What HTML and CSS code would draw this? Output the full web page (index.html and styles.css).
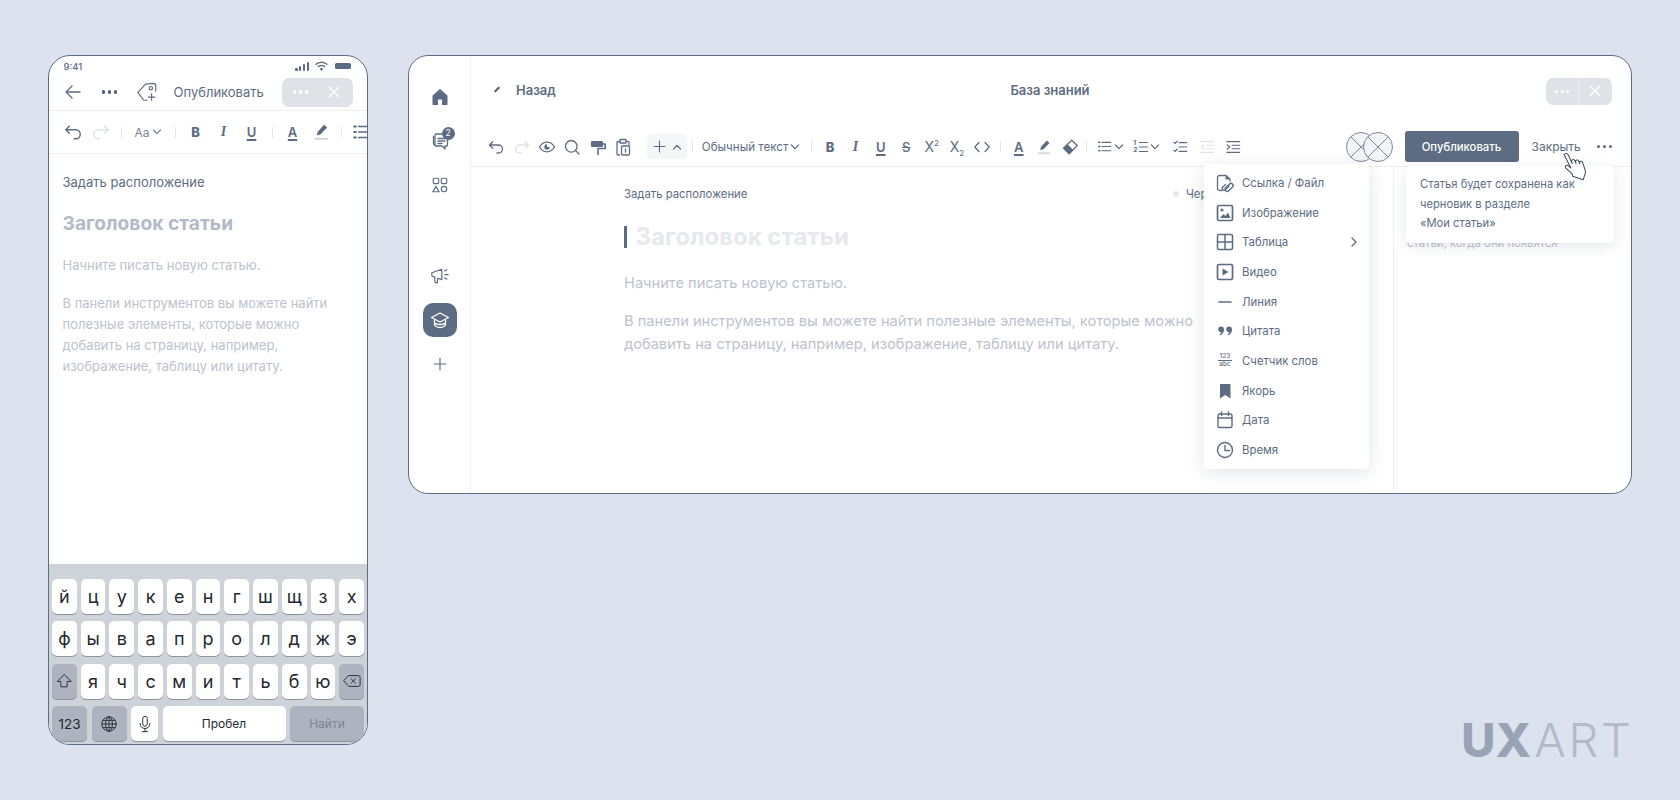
FILE: index.html
```html
<!DOCTYPE html>
<html lang="ru">
<head>
<meta charset="utf-8">
<title>База знаний</title>
<link rel="stylesheet" href="styles.css">
</head>
<body>
<svg class="sprite" xmlns="http://www.w3.org/2000/svg">
  <symbol id="undo" viewBox="0 0 18 18"><path d="M2.500 7h9a4 4 0 0 1 4 4v0a4 4 0 0 1-4 4H10M2.500 7l3.200-3.200M2.500 7l3.200 3.200"/></symbol>
  <symbol id="redo" viewBox="0 0 18 18"><path d="M15.500 7h-9a4 4 0 0 0-4 4v0a4 4 0 0 0 4 4H8M15.500 7l-3.200-3.200M15.500 7l-3.200 3.200"/></symbol>
  <symbol id="eye" viewBox="0 0 18 18"><path d="M1.500 9S4.200 4.200 9 4.200 16.500 9 16.500 9 13.800 13.800 9 13.800 1.500 9 1.500 9z"/><path class="solid" d="M9 6.300a2.700 2.700 0 1 0 2.700 2.700H9z"/></symbol>
  <symbol id="search" viewBox="0 0 18 18"><circle cx="8.300" cy="8.300" r="5.800"/><path d="M12.500 12.500 16 16"/></symbol>
  <symbol id="roller" viewBox="0 0 18 18"><path class="solid" d="M3 3h10a1 1 0 0 1 1 1v4a1 1 0 0 1-1 1H3a1 1 0 0 1-1-1V4a1 1 0 0 1 1-1z"/><path d="M14 6h2.200v4.500H9v6" stroke-width="1.600"/></symbol>
  <symbol id="clip" viewBox="0 0 18 18"><path d="M6 3.500H4a1 1 0 0 0-1 1V16a1 1 0 0 0 1 1h1.500M12 3.500h2a1 1 0 0 1 1 1V7"/><rect x="6" y="1.500" width="6" height="3.500" rx=".6"/><rect x="7.500" y="8" width="8" height="9" rx="1"/><path d="M11.500 11v3"/></symbol>
  <symbol id="plus" viewBox="0 0 18 18"><path d="M9 2.500v13M2.500 9h13"/></symbol>
  <symbol id="down" viewBox="0 0 10 10"><path d="m1.500 3 3.500 3.700L8.500 3"/></symbol>
  <symbol id="up" viewBox="0 0 10 10"><path d="m1.500 7 3.500-3.700L8.500 7"/></symbol>
  <symbol id="right" viewBox="0 0 10 10"><path d="m3 1 4 4-4 4"/></symbol>
  <symbol id="code" viewBox="0 0 18 18"><path d="M6 4.500 1.800 9 6 13.500M12 4.500 16.200 9 12 13.500"/></symbol>
  <symbol id="pen" viewBox="0 0 18 18"><path class="solid" d="m11.800 2.500 2.700 2.500-6 6.200-3.300.9.800-3.300z"/><path class="bar" d="M4 15.200h10.500" stroke-width="2"/></symbol>
  <symbol id="eraser" viewBox="0 0 18 18"><path d="m10.700 2.200 5.500 5.300-8 8.200L2.500 10.300z" fill="none"/><path class="solid" d="M6.500 6.200 12.200 12l-4 3.900-5.900-5.600z"/></symbol>
  <symbol id="list" viewBox="0 0 18 18"><path d="M6 4h10.500M6 9h10.500M6 14h10.500"/><path d="M2 4h1.500M2 9h1.500M2 14h1.500" stroke-width="1.800"/></symbol>
  <symbol id="lines" viewBox="0 0 10 15"><path d="M.5 2.500h9M.5 7.500h9M.5 12.500h9" /></symbol>
  <symbol id="check" viewBox="0 0 18 18"><path d="M8 4h8.500M8 9h8.500M8 14h8.500"/><path d="m2 3.500 1.500 1.500L6 2.500M2 12.500 3.500 14 6 11.500"/></symbol>
  <symbol id="outdent" viewBox="0 0 18 18"><path d="M2 3h14.500M8 7h8.500M8 11h8.500M2 15h14.500M5.500 6.500 2.500 9l3 2.500"/></symbol>
  <symbol id="indent" viewBox="0 0 18 18"><path d="M2 3h14.500M8 7h8.500M8 11h8.500M2 15h14.500M2.500 6.500 5.500 9l-3 2.500"/></symbol>
  <symbol id="close" viewBox="0 0 16 16"><path d="m2.500 2.500 11 11M13.500 2.500l-11 11"/></symbol>
  <symbol id="back" viewBox="0 0 18 18"><path d="M16 9H2M8 3 2 9l6 6"/></symbol>
  <symbol id="tag" viewBox="0 0 24 24"><path d="M12 21H8.500L2 12.500 10.500 3.500 19 2.500c1.500 0 2.500 1 2.500 2.500v6"/><circle cx="16.200" cy="7.800" r="1.800"/><path d="M17 14v7M13.500 17.500h7"/></symbol>
  <symbol id="link" viewBox="0 0 20 20"><path d="M7 17.500H4.500a2 2 0 0 1-2-2v-11a2 2 0 0 1 2-2h6.500L15 6v2"/><path class="solid" d="M10.500 2.500V6.500H15z"/><path d="m10 15.500 4.500-4.500a2 2 0 0 1 3 3l-4 4a2 2 0 0 1-3-.5M14 13l-4 4a1.800 1.800 0 0 1-2.500-2.500l3-3" stroke-width="1.400"/></symbol>
  <symbol id="image" viewBox="0 0 20 20"><rect x="2.500" y="2.500" width="15" height="15" rx="1.500" stroke-width="1.700"/><circle class="solid" cx="7" cy="7" r="1.600"/><path class="solid" d="m5 15 3.500-4 2 2 2.500-3.500 2.500 5.500z"/></symbol>
  <symbol id="table" viewBox="0 0 20 20"><rect x="2.500" y="2.500" width="15" height="15" rx="1.500" stroke-width="1.500"/><path d="M10 2.500v15M2.500 10h15" stroke-width="1.500"/></symbol>
  <symbol id="video" viewBox="0 0 20 20"><rect x="2.500" y="2.500" width="15" height="15" rx="1.500" stroke-width="1.700"/><path class="solid" d="M7.500 6.500v7l6-3.500z"/></symbol>
  <symbol id="line" viewBox="0 0 20 20"><path d="M4 10h12" stroke-width="1.600"/></symbol>
  <symbol id="quote" viewBox="0 0 20 20"><path class="solid" d="M6 5.500a3 3 0 0 1 3 3c0 2.800-1.500 4.900-3.900 5.800l-.5-.9c1-.6 1.600-1.400 1.800-2.100A2.900 2.900 0 1 1 6 5.500zM14 5.500a3 3 0 0 1 3 3c0 2.800-1.500 4.900-3.900 5.800l-.5-.9c1-.6 1.600-1.400 1.800-2.100A2.900 2.900 0 1 1 14 5.500z"/></symbol>
  <symbol id="bookmark" viewBox="0 0 20 20"><path class="solid" d="M5 3h10.500v14.500L10.200 14 5 17.500z"/></symbol>
  <symbol id="calendar" viewBox="0 0 20 20"><rect x="3" y="4" width="14" height="13.500" rx="1.500" stroke-width="1.400"/><path d="M3 8h14M6.500 2v3.500M13.500 2v3.500" stroke-width="1.400"/></symbol>
  <symbol id="clock" viewBox="0 0 20 20"><circle cx="10" cy="10" r="7.500" stroke-width="1.400"/><path d="M10 5.500V10.500h4.500" stroke-width="1.400"/></symbol>
  <symbol id="home" viewBox="0 0 20 20"><path class="solid" d="M10 2 2.500 8.500V18H8v-5.500h4V18h5.500V8.500z"/></symbol>
  <symbol id="chat" viewBox="0 0 20 20"><path d="M3.500 5.500v7c0 1 .6 1.500 1.500 1.500"/><path d="M6 3h10.500a1 1 0 0 1 1 1v10a1 1 0 0 1-1 1H15v3l-3-3H6a1 1 0 0 1-1-1V4a1 1 0 0 1 1-1z"/><path d="M8 7.500h7M8 10h7M8 12.500h4"/></symbol>
  <symbol id="apps" viewBox="0 0 20 20"><rect x="2.500" y="2.500" width="6" height="6" rx="1.500"/><rect x="11.500" y="2.500" width="6" height="6" rx="1.500"/><path d="M5.500 11.500 9 17.500H2z" stroke-linejoin="round"/><circle cx="14.500" cy="14.500" r="3"/></symbol>
  <symbol id="mega" viewBox="0 0 22 20"><path d="M2 6.500 13 2.500v11.500L8.500 12.500l-.5 5-2.500-.5-.5-6L2 10z"/><path d="M16 4.500l2.500-1.500M16.500 8.500H20M16 12l2.500 1.500"/></symbol>
  <symbol id="cap" viewBox="0 0 20 20"><path d="M10 3 1.500 7.500 10 12l8.500-4.500z" stroke-linejoin="round"/><path d="M4.500 10v4.500c0 1.200 2.500 3 5.500 3s5.500-1.800 5.500-3V10M4.500 13c2 2 9 2 11 0"/></symbol>
  <symbol id="shift" viewBox="0 0 20 20"><path d="M10 3 2.500 10.500H6.500V16.500h7V10.500h4z" stroke-linejoin="round"/></symbol>
  <symbol id="bksp" viewBox="0 0 20 16"><path d="M6.500 2H17a2 2 0 0 1 2 2v8a2 2 0 0 1-2 2H6.500L1 8zM9 5.500l5 5M14 5.500l-5 5" stroke-linejoin="round"/></symbol>
  <symbol id="globe" viewBox="0 0 20 20"><circle cx="10" cy="10" r="8"/><ellipse cx="10" cy="10" rx="3.800" ry="8"/><path d="M10 2v16M2 10h16M3.200 6h13.600M3.200 14h13.600"/></symbol>
  <symbol id="mic" viewBox="0 0 20 20"><rect x="7.500" y="1.500" width="5" height="11" rx="2.500"/><path d="M4.500 9.500c0 3.200 2.500 5.500 5.500 5.500s5.500-2.300 5.500-5.500M10 15v3M7 18.500h6"/></symbol>
  <symbol id="wifi" viewBox="0 0 16 12"><path class="solid" d="M8 2.200c2.300 0 4.300.9 5.800 2.300l1.100-1.200A10 10 0 0 0 8 .5 10 10 0 0 0 1.100 3.300l1.100 1.200A8.400 8.400 0 0 1 8 2.200zM8 5.700c1.300 0 2.500.5 3.400 1.300l1.100-1.200A6.500 6.500 0 0 0 8 4a6.500 6.500 0 0 0-4.500 1.800L4.600 7A5 5 0 0 1 8 5.700zM8 7.700c-.8 0-1.500.3-2 .8L8 10.800l2-2.300c-.5-.5-1.200-.8-2-.8z"/></symbol>
</svg>

<main class="stage">
  <section class="phone">
    <div class="status">
      <span class="time">9:41</span>
      <div class="status-icons">
        <span class="signal"><i></i><i></i><i></i><i></i></span>
        <svg class="ic wifi"><use href="#wifi"/></svg>
        <span class="battery"></span>
      </div>
    </div>
    <div class="ph-head">
      <span class="slot"><svg class="ic i18"><use href="#back"/></svg></span>
      <span class="dots i20"><i></i><i></i><i></i></span>
      <span class="slot"><svg class="ic i22"><use href="#tag"/></svg></span>
      <span class="ph-publish">Опубликовать</span>
      <div class="ghost ghost-phone">
        <span class="dots dots-white"><i></i><i></i><i></i></span>
        <svg class="ic ghost-x"><use href="#close"/></svg>
      </div>
    </div>
    <div class="ph-tools">
      <svg class="ic i20"><use href="#undo"/></svg>
      <svg class="ic i20 faded"><use href="#redo"/></svg>
      <span class="sep ph-sep"></span>
      <span class="ph-aa">Aa<svg class="ic chev"><use href="#down"/></svg></span>
      <span class="sep ph-sep"></span>
      <span class="glyph g-b i20">B</span>
      <span class="glyph g-i i20">I</span>
      <span class="glyph g-u i20">U</span>
      <span class="sep ph-sep"></span>
      <span class="glyph g-a i20">A</span>
      <svg class="ic i20"><use href="#pen"/></svg>
      <span class="sep ph-sep"></span>
      <svg class="ic i20"><use href="#list"/></svg>
    </div>
    <div class="ph-doc">
      <p class="ph-place">Задать расположение</p>
      <h2 class="ph-title">Заголовок статьи</h2>
      <p class="ph-text">Начните писать новую статью.</p>
      <p class="ph-text ph-text-long">В панели инструментов вы можете найти полезные элементы, которые можно добавить на страницу, например, изображение, таблицу или цитату.</p>
    </div>
    <div class="kbd">
      <div class="kb-row"><b>й</b><b>ц</b><b>у</b><b>к</b><b>е</b><b>н</b><b>г</b><b>ш</b><b>щ</b><b>з</b><b>х</b></div>
      <div class="kb-row"><b>ф</b><b>ы</b><b>в</b><b>а</b><b>п</b><b>р</b><b>о</b><b>л</b><b>д</b><b>ж</b><b>э</b></div>
      <div class="kb-row"><b class="fn"><svg class="ic kb-ic"><use href="#shift"/></svg></b><b>я</b><b>ч</b><b>с</b><b>м</b><b>и</b><b>т</b><b>ь</b><b>б</b><b>ю</b><b class="fn"><svg class="ic kb-ic"><use href="#bksp"/></svg></b></div>
      <div class="kb-last">
        <b class="fn k-123">123</b>
        <b class="fn k-globe"><svg class="ic kb-ic"><use href="#globe"/></svg></b>
        <b class="k-mic"><svg class="ic kb-ic"><use href="#mic"/></svg></b>
        <b class="k-space">Пробел</b>
        <b class="fn k-go">Найти</b>
      </div>
    </div>
  </section>

  <div class="right-col">
    <section class="window">
      <aside class="side">
        <div class="side-item"><svg class="ic i20"><use href="#home"/></svg></div>
        <div class="side-item"><span class="chat"><svg class="ic i20"><use href="#chat"/></svg><span class="badge">2</span></span></div>
        <div class="side-item side-gap"><svg class="ic i18"><use href="#apps"/></svg></div>
        <div class="side-item"><svg class="ic i20"><use href="#mega"/></svg></div>
        <div class="side-item"><span class="side-active"><svg class="ic i20"><use href="#cap"/></svg></span></div>
        <div class="side-item"><svg class="ic i16"><use href="#plus"/></svg></div>
      </aside>
      <div class="main">
        <header class="head">
          <div class="head-left"><span class="tick"></span><span class="back-label">Назад</span></div>
          <div class="head-title">База знаний</div>
          <div class="head-right">
            <div class="ghost ghost-desk">
              <span class="dots dots-white"><i></i><i></i><i></i></span>
              <span class="ghost-line"></span>
              <svg class="ic ghost-x"><use href="#close"/></svg>
            </div>
          </div>
        </header>
        <div class="tools">
          <span class="tb"><svg class="ic i18"><use href="#undo"/></svg></span>
          <span class="tb"><svg class="ic i18 faded"><use href="#redo"/></svg></span>
          <span class="tb"><svg class="ic i18"><use href="#eye"/></svg></span>
          <span class="tb"><svg class="ic i18"><use href="#search"/></svg></span>
          <span class="tb"><svg class="ic i18"><use href="#roller"/></svg></span>
          <span class="tb"><svg class="ic i18"><use href="#clip"/></svg></span>
          <span class="plusbox"><svg class="ic i15"><use href="#plus"/></svg><svg class="ic chev"><use href="#up"/></svg></span>
          <span class="sep sep-a"></span>
          <span class="style-pick">Обычный текст<svg class="ic chev"><use href="#down"/></svg></span>
          <span class="sep sep-b"></span>
          <span class="tb glyph g-b">B</span>
          <span class="tb glyph g-i">I</span>
          <span class="tb glyph g-u">U</span>
          <span class="tb glyph g-s">S</span>
          <span class="tb glyph g-x"><span>X<sup>2</sup></span></span>
          <span class="tb glyph g-x"><span>X<sub>2</sub></span></span>
          <span class="tb"><svg class="ic i18"><use href="#code"/></svg></span>
          <span class="sep sep-a"></span>
          <span class="tb glyph g-a">A</span>
          <span class="tb"><svg class="ic i18"><use href="#pen"/></svg></span>
          <span class="tb"><svg class="ic i18"><use href="#eraser"/></svg></span>
          <span class="sep sep-c"></span>
          <span class="tb-drop"><svg class="ic i15"><use href="#list"/></svg><svg class="ic chev"><use href="#down"/></svg></span>
          <span class="tb-drop tb-drop-2"><span class="nums"><span>1</span><span>2</span></span><svg class="ic num-lines"><use href="#lines"/></svg><svg class="ic chev"><use href="#down"/></svg></span>
          <span class="tb"><svg class="ic i16"><use href="#check"/></svg></span>
          <span class="tb tb-wide"><svg class="ic i16 faded"><use href="#outdent"/></svg></span>
          <span class="tb"><svg class="ic i16"><use href="#indent"/></svg></span>
          <div class="tools-end">
            <span class="avatars"><i class="ava"></i><i class="ava ava-2"></i></span>
            <button class="publish">Опубликовать</button>
            <span class="close-label">Закрыть</span>
            <span class="dots dots-end"><i></i><i></i><i></i></span>
          </div>
        </div>
        <div class="body">
          <div class="editor">
            <div class="doc">
              <div class="meta"><span>Задать расположение</span><span class="draft"><i></i>Черновик</span></div>
              <h1 class="title"><span class="caret"></span>Заголовок статьи</h1>
              <p class="text">Начните писать новую статью.</p>
              <p class="text text-long">В панели инструментов вы можете найти полезные элементы, которые можно добавить на страницу, например, изображение, таблицу или цитату.</p>
            </div>
          </div>
          <aside class="panel">
            <p>статьи, когда они появятся</p>
          </aside>
          <ul class="menu">
            <li><svg class="ic i20"><use href="#link"/></svg>Ссылка / Файл</li>
            <li><svg class="ic i20"><use href="#image"/></svg>Изображение</li>
            <li><svg class="ic i20"><use href="#table"/></svg>Таблица<svg class="ic menu-arrow"><use href="#right"/></svg></li>
            <li><svg class="ic i20"><use href="#video"/></svg>Видео</li>
            <li><svg class="ic i20"><use href="#line"/></svg>Линия</li>
            <li><svg class="ic i20"><use href="#quote"/></svg>Цитата</li>
            <li><span class="counter"><span>123</span><span>abc</span></span>Счетчик слов</li>
            <li><svg class="ic i20"><use href="#bookmark"/></svg>Якорь</li>
            <li><svg class="ic i20"><use href="#calendar"/></svg>Дата</li>
            <li><svg class="ic i20"><use href="#clock"/></svg>Время</li>
          </ul>
          <div class="tip">Статья будет сохранена как<br>черновик в разделе<br>«Мои статьи»</div>
        </div>
        <svg class="hand" viewBox="0 0 28 28"><path d="M4.500 3.200c.8-1.600 3-1.300 3.600.3L11.600 11l-.5-1.900c-.4-1.600 2-2.300 2.700-.7l1.100 2.600-.4-1.600c-.3-1.500 2-2.100 2.700-.6l1 2.500-.2-1c-.3-1.500 1.900-1.900 2.500-.5l2.300 6.500c.8 2.300.3 4-.6 5.600l-1 3.200-9.300-3-.4-2L5.800 14.800c-1-1.200.5-3 2-2l2.600 2z"/></svg>
      </div>
    </section>
    <div class="logo"><strong>UX</strong><span>ART</span></div>
  </div>
</main>
</body>
</html>
```
FILE: styles.css
```css
* { box-sizing: border-box; }
html, body { margin: 0; height: 100%; }
body {
  background: #dde3ee;
  color: #5d6c82;
  font-family: Inter, "Liberation Sans", sans-serif;
  overflow: hidden;
}
p, h1, h2, ul { margin: 0; padding: 0; }
.sprite { position: absolute; width: 0; height: 0; overflow: hidden; }

.ic { display: block; flex: none; fill: none; stroke: currentColor; stroke-width: 1.3; stroke-linecap: round; stroke-linejoin: round; }
.solid { fill: currentColor; stroke: none; }
.bar { stroke: #d5d9e0; }
.i15 { width: 15px; height: 15px; }
.i16 { width: 16px; height: 16px; }
.i18 { width: 18px; height: 18px; }
.i20 { width: 20px; height: 20px; }
.i22 { width: 22px; height: 22px; }
.slot { width: 20px; flex: none; display: flex; align-items: center; justify-content: center; }
.faded { color: #dfe3e9; }
.chev { width: 10px; height: 10px; stroke-width: 1.200; }

.stage { display: flex; gap: 40px; padding: 55px 48px 0; align-items: flex-start; }

/* phone */
.phone {
  width: 320px; height: 690px; flex: none;
  display: flex; flex-direction: column;
  background: #fff; border: 1.500px solid #5f6c83; border-radius: 22px; overflow: hidden;
}
.status { height: 18px; flex: none; padding: 2px 16px 0 14.500px; display: flex; align-items: center; justify-content: space-between; }
.time { font-size: 9.500px; font-weight: 500; color: #5d6c82; }
.status-icons { display: flex; align-items: center; gap: 5px; }
.signal { display: flex; align-items: flex-end; gap: 1.500px; height: 9px; }
.signal i { display: block; width: 2.300px; background: #5d6c82; border-radius: 1px; }
.signal i:nth-child(1) { height: 3px; }
.signal i:nth-child(2) { height: 5px; }
.signal i:nth-child(3) { height: 7px; }
.signal i:nth-child(4) { height: 9px; }
.wifi { width: 15px; height: 11px; stroke: none; }
.battery { width: 16px; height: 6.500px; background: #5d6c82; border-radius: 1.500px; margin-left: 1px; }

.ph-head { height: 37px; flex: none; display: flex; align-items: center; gap: 17px; padding: 0 0 0 13.500px; border-bottom: 1px solid #eceef2; }
.ph-publish { font-size: 13px; white-space: nowrap; width: 91px; }
.dots { display: flex; align-items: center; justify-content: center; gap: 2.500px; flex: none; }
.dots i { display: block; width: 3.500px; height: 3.500px; border-radius: 50%; background: #4e5d74; }
.dots-white i { background: #fff; }
.ghost { display: flex; align-items: center; background: #dfe3e8; flex: none; }
.ghost-phone { width: 71px; height: 29px; border-radius: 7px; padding: 0 12px 0 11px; justify-content: space-between; }
.ghost-x { width: 14px; height: 14px; color: #fff; stroke-width: 1.600; }
.ghost-desk { width: 66px; height: 27px; border-radius: 7px; }
.ghost-desk .dots { width: 32px; }
.ghost-desk .dots i { width: 3px; height: 3px; }
.ghost-line { width: 1px; height: 100%; background: #eceef1; }
.ghost-desk .ghost-x { margin-left: 9px; }

.ph-tools { height: 43px; flex: none; display: flex; align-items: center; gap: 8px; padding-left: 13.500px; border-bottom: 1px solid #f0f1f4; overflow: hidden; }
.sep { display: block; flex: none; width: 1px; height: 11px; background: #e3e6ea; }
.ph-sep { margin: 0 2px; }
.ph-aa { width: 33px; flex: none; display: flex; align-items: center; gap: 2px; padding-left: 3px; font-size: 12px; color: #7a8799; }

.glyph { display: flex; align-items: center; justify-content: center; flex: none; color: #5d6c82; height: 20px; }
.g-b { font-size: 13px; font-weight: 800; }
.g-i { font-family: "Liberation Serif", serif; font-size: 14px; font-style: italic; font-weight: 700; }
.g-u { font-size: 13px; font-weight: 600; text-decoration: underline; text-underline-offset: 2px; text-decoration-thickness: 1.500px; }
.g-s { font-size: 13px; font-weight: 500; text-decoration: line-through; text-decoration-thickness: 1px; }
.g-a { font-size: 13px; font-weight: 600; text-decoration: underline; text-underline-offset: 2px; text-decoration-thickness: 2px; }
.g-x { font-size: 14px; font-weight: 400; }
.g-x sup, .g-x sub { font-size: 8px; line-height: 0; }

.ph-doc { flex: 1; padding: 19px 14px 0 13.500px; }
.ph-place { font-size: 13px; line-height: 18px; color: #5d6c82; }
.ph-title { font-size: 19.200px; font-weight: 700; line-height: 26px; margin-top: 19px; color: #b3bac7; }
.ph-text { font-size: 13px; line-height: 21px; margin-top: 19px; color: #bcc3ce; }
.ph-text-long { margin-top: 17px; }

.kbd { height: 180px; flex: none; background: #ced2d9; padding: 14.500px 3px 0; display: flex; flex-direction: column; gap: 7.500px; }
.kb-row { display: grid; grid-template-columns: repeat(11, 1fr); gap: 4px; height: 35px; flex: none; }
.kb-last { display: flex; gap: 4.500px; height: 35px; flex: none; }
.kbd b {
  display: flex; align-items: center; justify-content: center;
  background: #fff; border-radius: 5px; box-shadow: 0 1px 0 #8e939c;
  font-weight: 400; font-size: 18px; color: #24282e;
}
.kbd b.fn { background: #adb3bf; }
.kb-ic { width: 18px; height: 18px; color: #2f343b; stroke-width: 1.100; }
.kbd .k-123 { width: 35px; font-size: 13.500px; }
.kbd .k-globe { width: 35px; }
.kbd .k-mic { width: 27px; }
.kbd .k-space { flex: 1; font-size: 12px; }
.kbd .k-go { width: 74px; font-size: 12px; color: #7d838f; }

/* desktop */
.right-col { width: 1224px; flex: none; display: flex; flex-direction: column; }
.window {
  height: 439px; display: flex; position: relative;
  background: #fff; border: 1.500px solid #5f6c83; border-radius: 20px; overflow: hidden;
}
.side { width: 62px; flex: none; border-right: 1px solid #f0f1f5; padding-top: 19px; }
.side-item { height: 44px; display: flex; align-items: center; justify-content: center; }
.side-gap { margin-bottom: 47px; }
.chat { position: relative; display: block; }
.badge {
  position: absolute; top: -4px; right: -5px; width: 13px; height: 13px; border-radius: 50%;
  background: #5d6c82; color: #fff; font-size: 8.500px; line-height: 13px; text-align: center;
}
.side-active { width: 34px; height: 34px; border-radius: 10px; background: #5d6c82; color: #fff; display: flex; align-items: center; justify-content: center; }

.main { flex: 1; min-width: 0; display: flex; flex-direction: column; position: relative; }
.head { height: 71px; flex: none; display: grid; grid-template-columns: 1fr auto 1fr; padding: 21.500px 19px 0 25px; }
.head-left { display: flex; align-items: flex-start; gap: 18px; padding-top: 4px; }
.tick { width: 2px; height: 7px; margin-top: 4px; background: #4e5d74; transform: rotate(45deg); border-radius: 1px; }
.back-label { font-size: 13px; font-weight: 600; line-height: 16px; }
.head-title { font-size: 13px; font-weight: 600; line-height: 16px; padding: 4px 8px 0 0; }
.head-right { display: flex; justify-content: flex-end; }

.tools { height: 40px; flex: none; display: flex; align-items: center; padding-left: 12.500px; padding-right: 19px; border-bottom: 1px solid #eceef2; }
.tb { width: 25.400px; flex: none; display: flex; align-items: center; justify-content: center; }
.tb.glyph { height: 20px; }
.tb-wide { margin-left: 2px; }
.plusbox { width: 40px; height: 25px; margin-left: 11px; flex: none; display: flex; align-items: center; justify-content: center; gap: 5px; background: #f5f6f8; border-radius: 4px; }
.sep-a { margin: 0 5px; }
.sep-b { margin: 0 5px 0 11px; }
.sep-c { margin: 0 10px 0 4px; }
.style-pick { margin-left: 4px; display: flex; align-items: center; gap: 2px; font-size: 11.600px; white-space: nowrap; flex: none; }
.tb-drop { width: 30px; display: flex; align-items: center; gap: 2px; flex: none; }
.tb-drop-2 { width: 34px; margin-left: 6px; gap: 0; }
.nums { display: flex; flex-direction: column; width: 6px; font-size: 6.500px; font-weight: 700; line-height: 7px; }
.num-lines { width: 9px; height: 14px; margin-right: 2px; }
.tools-end { margin-left: auto; display: flex; align-items: center; flex: none; }
.avatars { display: flex; width: 47px; margin-right: 12px; }
.ava {
  display: block; width: 30px; height: 30px; flex: none; border-radius: 50%; border: 1px solid #7c8798;
  background:
    linear-gradient(45deg, transparent 49%, #7c8798 49%, #7c8798 51%, transparent 51%),
    linear-gradient(-45deg, transparent 49%, #7c8798 49%, #7c8798 51%, transparent 51%),
    #f3f4f7;
}
.ava-2 { margin-left: -13px; }
.publish {
  width: 114px; height: 31px; flex: none; margin: 0 13px 0 0; padding: 0; border: 0; border-radius: 3px;
  background: #5d6c82; color: #fff; font: 500 11.300px Inter, sans-serif;
}
.close-label { font-size: 12px; width: 48px; white-space: nowrap; margin-right: 17px; }
.dots-end i { background: #5d6c82; }

.body { flex: 1; min-height: 0; display: flex; position: relative; }
.editor { flex: 1; min-width: 0; padding: 0 0 0 153px; overflow: hidden; }
.doc { width: 616px; padding-top: 18px; }
.meta { display: flex; justify-content: space-between; font-size: 11.300px; line-height: 18px; }
.draft { display: flex; align-items: center; gap: 7px; }
.draft i { display: block; width: 6px; height: 6px; border-radius: 50%; background: #e3e6eb; }
.title { display: flex; align-items: center; gap: 9px; margin-top: 20px; font-size: 24px; font-weight: 700; line-height: 28px; color: #e6e9ee; }
.caret { display: block; width: 2.500px; height: 22px; background: #5d6c82; }
.text { font-size: 14.650px; line-height: 22.500px; margin-top: 21px; color: #bcc3ce; }
.text-long { margin-top: 15.500px; }
.panel { width: 238px; flex: none; border-left: 1px solid #eceef2; padding: 67px 0 0 13px; font-size: 11.300px; line-height: 19px; color: #bcc3ce; white-space: nowrap; }

.menu {
  position: absolute; left: 733px; top: -3px; width: 165px; height: 305px; padding: 4px 0;
  list-style: none; background: #fff; border-radius: 4px;
  box-shadow: 0 3px 18px rgba(93, 108, 130, .18);
  font-size: 11.400px;
}
.menu li { height: 29.700px; display: flex; align-items: center; gap: 7px; padding: 0 0 0 11px; }
.menu-arrow { width: 10px; height: 10px; margin-left: auto; margin-right: 10px; }
.counter { width: 20px; flex: none; display: flex; flex-direction: column; align-items: center; font-size: 6.500px; line-height: 7.500px; font-weight: 500; }
.counter span + span { border-top: 1px solid #5d6c82; width: 14px; text-align: center; }
.tip {
  position: absolute; left: 935px; top: -1px; width: 208px; height: 77px; padding: 9px 14px;
  background: #fff; border-radius: 4px; box-shadow: 0 3px 14px rgba(93, 108, 130, .16);
  font-size: 11.200px; line-height: 19.700px;
}
.hand { position: absolute; left: 1088px; top: 95px; width: 32px; height: 32px; fill: #fff; stroke: #3f4a5c; stroke-width: .9; stroke-linejoin: round; }

.logo { margin: 222px 1px 0 0; align-self: flex-end; font-size: 47px; line-height: 1; }
.logo strong { font-weight: 800; color: #9aa3b5; margin-right: 3px; }
.logo span { font-weight: 300; color: #b3bac8; letter-spacing: 2.700px; margin-right: -2.700px; }
```
